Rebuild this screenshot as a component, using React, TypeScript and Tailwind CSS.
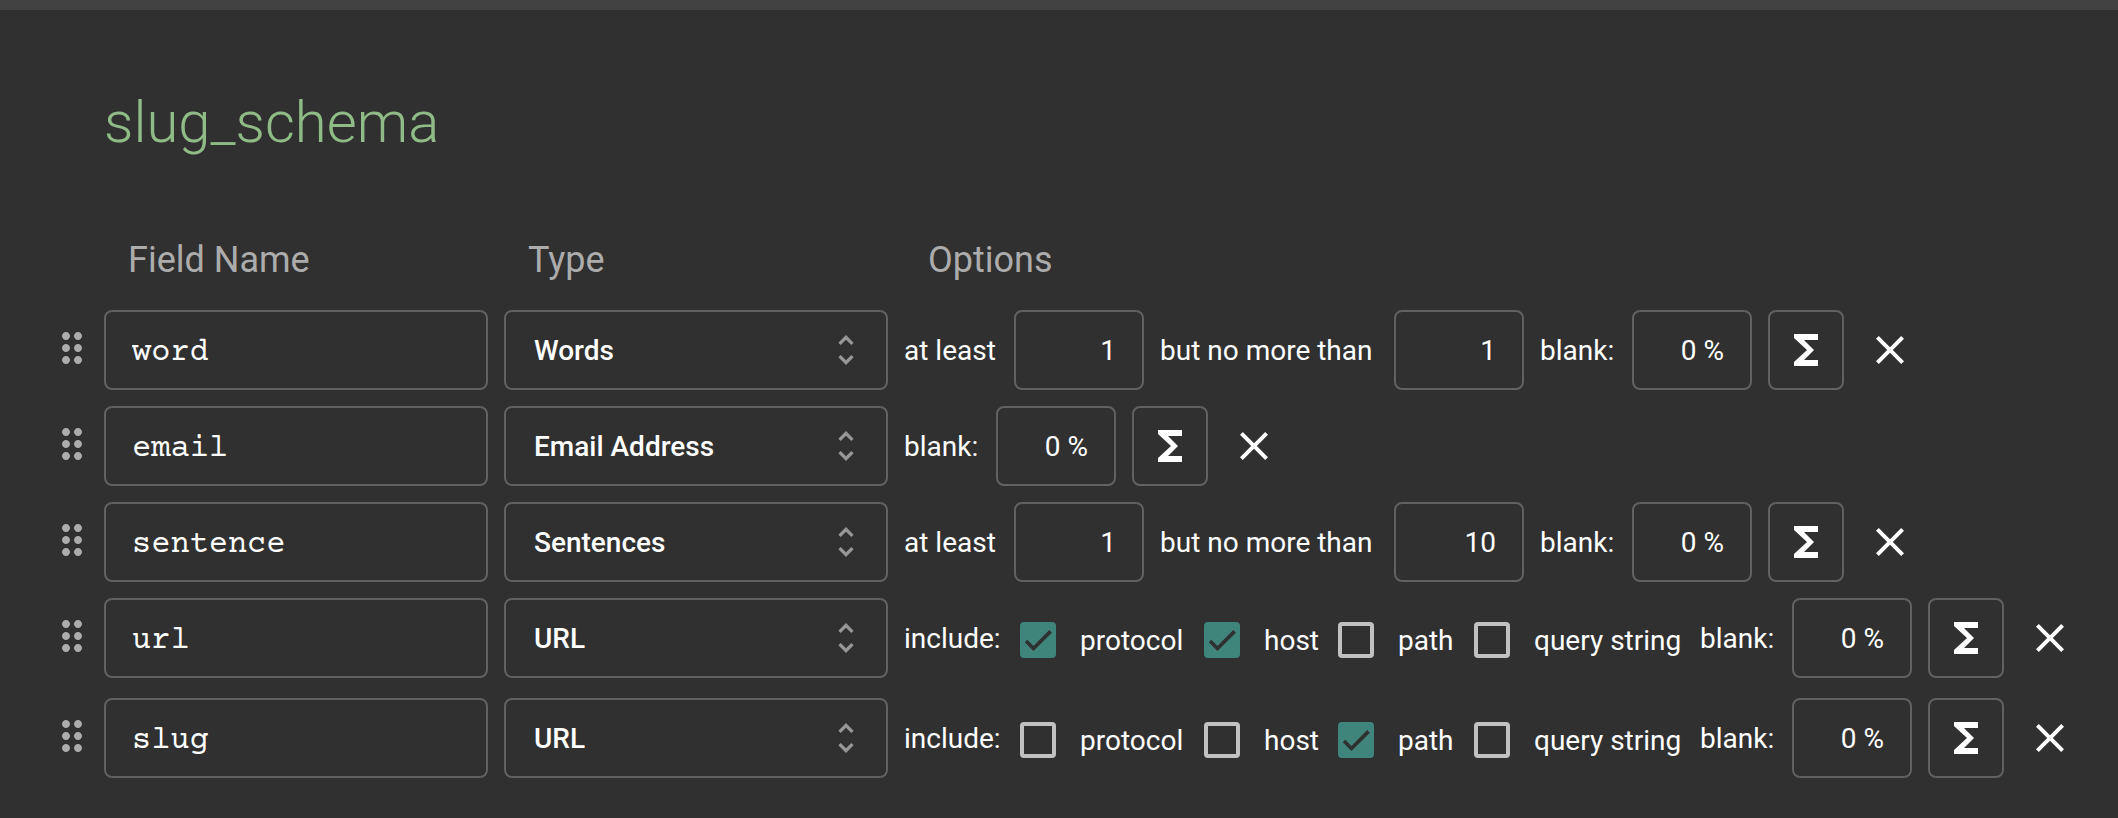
import { useState } from "react";

type Option =
  | { kind: "range"; min: string; max: string }
  | { kind: "include"; checked: string[] };

type Field = { name: string; type: string; option?: Option };

const FIELDS: Field[] = [
  { name: "word", type: "Words", option: { kind: "range", min: "1", max: "1" } },
  { name: "email", type: "Email Address" },
  { name: "sentence", type: "Sentences", option: { kind: "range", min: "1", max: "10" } },
  { name: "url", type: "URL", option: { kind: "include", checked: ["protocol", "host"] } },
  { name: "slug", type: "URL", option: { kind: "include", checked: ["path"] } },
];

const TYPES = ["Words", "Email Address", "Sentences", "URL"];

const PARTS = [
  { name: "protocol", width: "w-[108px]" },
  { name: "host", width: "w-[58px]" },
  { name: "path", width: "w-[60px]" },
  { name: "query string", width: "w-[150px]" },
];

const box = "h-20 rounded-lg border-2 border-[#616161] bg-transparent text-white outline-none focus:border-[#3f857b]";
const caption = "flex h-20 shrink-0 items-center whitespace-nowrap pt-0.5";

function Icon({ d, className }: { d: string; className: string }) {
  return (
    <svg viewBox="0 0 24 24" fill="currentColor" aria-hidden="true" className={className}>
      <path d={d} />
    </svg>
  );
}

const DRAG =
  "M11 18c0 1.1-.9 2-2 2s-2-.9-2-2 .9-2 2-2 2 .9 2 2zm-2-8c-1.1 0-2 .9-2 2s.9 2 2 2 2-.9 2-2-.9-2-2-2zm0-6c-1.1 0-2 .9-2 2s.9 2 2 2 2-.9 2-2-.9-2-2-2zm6 4c1.1 0 2-.9 2-2s-.9-2-2-2-2 .9-2 2 .9 2 2 2zm0 2c-1.1 0-2 .9-2 2s.9 2 2 2 2-.9 2-2-.9-2-2-2zm0 6c-1.1 0-2 .9-2 2s.9 2 2 2 2-.9 2-2-.9-2-2-2z";
const UNFOLD =
  "M12 5.83L15.17 9l1.41-1.41L12 3 7.41 7.59 8.83 9 12 5.83zm0 12.34L8.83 15l-1.41 1.41L12 21l4.59-4.59L15.17 15 12 18.17z";
const SIGMA = "M18 4H6v2l6.5 6L6 18v2h12v-3h-7l5-5-5-5h7z";
const CLOSE =
  "M19 6.41L17.59 5 12 10.59 6.41 5 5 6.41 10.59 12 5 17.59 6.41 19 12 13.41 17.59 19 19 17.59 13.41 12z";

function Range({ id, min, max }: { id: string; min: string; max: string }) {
  return (
    <>
      <label htmlFor={`${id}-min`} className={`${caption} w-[94px]`}>at least</label>
      <input id={`${id}-min`} defaultValue={min} inputMode="numeric" className={`${box} w-[130px] shrink-0 px-[26px] text-right`} />
      <label htmlFor={`${id}-max`} className={`${caption} w-[218px]`}>but no more than</label>
      <input id={`${id}-max`} defaultValue={max} inputMode="numeric" className={`${box} w-[130px] shrink-0 px-[26px] text-right`} />
    </>
  );
}

function Include({ id, initial }: { id: string; initial: string[] }) {
  const [checked, setChecked] = useState(initial);
  const toggle = (name: string) =>
    setChecked((c) => (c.includes(name) ? c.filter((n) => n !== name) : [...c, name]));
  return (
    <>
      <span className={`${caption} w-[100px]`}>include:</span>
      {PARTS.map((part) => {
        const key = `${id}-${part.name.replace(" ", "-")}`;
        return (
          <div key={key} className="flex h-21 shrink-0 items-center gap-6">
            <span className="grid size-9 place-items-center">
              <input
                id={key}
                type="checkbox"
                checked={checked.includes(part.name)}
                onChange={() => toggle(part.name)}
                className="peer col-start-1 row-start-1 size-9 appearance-none rounded border-4 border-[#c1c1c1] checked:border-[#3f857b] checked:bg-[#3f857b]"
              />
              <svg
                viewBox="0 0 24 24"
                fill="none"
                stroke="#303030"
                strokeWidth="3.12"
                aria-hidden="true"
                className="pointer-events-none invisible col-start-1 row-start-1 size-7 peer-checked:visible"
              >
                <path d="M1.73 12.91 8.1 19.28 22.79 4.59" />
              </svg>
            </span>
            <label htmlFor={key} className={`${part.width} whitespace-nowrap pt-0.5`}>{part.name}</label>
          </div>
        );
      })}
    </>
  );
}

function FieldRow({ field }: { field: Field }) {
  const id = `field-${field.name}`;
  return (
    <li className="flex items-start gap-4">
      <div className="flex shrink-0 items-start gap-2">
        <button type="button" aria-label={`Reorder ${field.name}`} className="flex h-19 cursor-grab items-center text-[#acacac]">
          <Icon d={DRAG} className="size-12" />
        </button>
        <input
          aria-label="Field Name"
          defaultValue={field.name}
          className={`${box} w-96 px-[26px] pt-1.5 font-['Courier_Prime','Courier_New','Liberation_Mono',monospace] text-[32px]`}
        />
      </div>
      <div className="relative shrink-0">
        <select aria-label="Type" defaultValue={field.type} className={`${box} w-96 appearance-none px-7 pt-0.5 font-medium`}>
          {TYPES.map((t) => (
            <option key={t} className="bg-[#303030]">{t}</option>
          ))}
        </select>
        <Icon d={UNFOLD} className="pointer-events-none absolute top-5 right-[22px] size-10 text-[#979797]" />
      </div>
      {field.option?.kind === "range" && <Range id={id} min={field.option.min} max={field.option.max} />}
      {field.option?.kind === "include" && <Include id={id} initial={field.option.checked} />}
      <label htmlFor={`${id}-blank`} className={`${caption} w-[76px]`}>blank:</label>
      <input id={`${id}-blank`} defaultValue="0 %" className={`${box} w-[120px] shrink-0 px-[26px] text-right`} />
      <button type="button" aria-label="Formula" className={`${box} flex w-[76px] shrink-0 items-center justify-center`}>
        <Icon d={SIGMA} className="size-12 shrink-0" />
      </button>
      <button type="button" aria-label={`Remove ${field.name}`} className="flex h-20 w-[60px] shrink-0 items-center justify-center">
        <Icon d={CLOSE} className="size-12" />
      </button>
    </li>
  );
}

export default function App() {
  return (
    <main className="min-h-screen border-t-10 border-[#424242] bg-[#303030] pb-10 font-[Roboto,sans-serif] text-[28px] leading-10 text-white">
      <h1 className="px-[104px] pt-[76px] text-[58px] leading-[72px] font-light text-[#8fbc86]">slug_schema</h1>
      <div className="mt-[76px] flex gap-4 pl-[104px] text-[36px] leading-[52px] text-[#acacac]">
        <span className="w-96 px-6">Field Name</span>
        <span className="w-96 px-6">Type</span>
        <span className="px-6">Options</span>
      </div>
      <ul className="mt-6 flex flex-col gap-4 pl-12">
        {FIELDS.map((f) => (
          <FieldRow key={f.name} field={f} />
        ))}
      </ul>
    </main>
  );
}
